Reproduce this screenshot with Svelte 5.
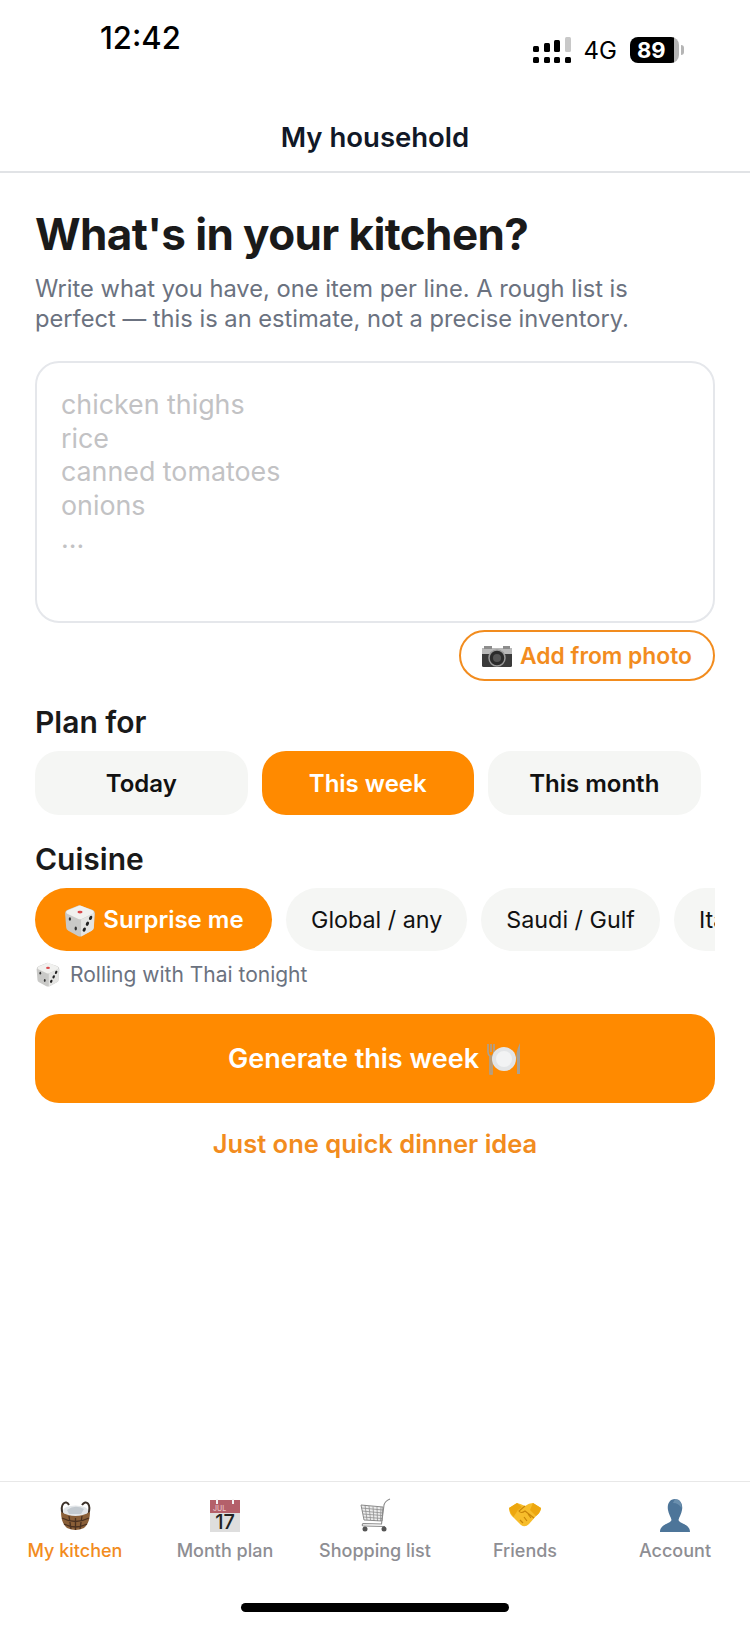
<script>
  const plans = ['Today', 'This week', 'This month'];
  const cuisines = ['Global / any', 'Saudi / Gulf', 'Italian'];
  const tabs = [
    { label: 'My kitchen', icon: 'basket', active: true },
    { label: 'Month plan', icon: 'calendar' },
    { label: 'Shopping list', icon: 'cart' },
    { label: 'Friends', icon: 'hands' },
    { label: 'Account', icon: 'bust' }
  ];
  const placeholder = 'chicken thighs\nrice\ncanned tomatoes\nonions\n...';
</script>

{#snippet dice(size)}
  <svg class="emoji" width={size} height={size} viewBox="0 0 32 32">
    <path d="M15 2 L27 6 Q30 7 30 10 L29 23 Q29 25 27 26 L18 31 Q16 32 14 31 L5 26 Q3 25 3 23 L2 10 Q2 7 5 6 Z" fill="#c9c9c7" />
    <path d="M15 2.5 Q16 2 17 2.5 L28 7 Q30 8.5 28 10 L17.500 15 Q16 15.600 14.500 15 L4 10 Q2 8.500 4 7 Z" fill="#f1f1ef" />
    <path d="M17 15.500 L29.500 9.500 L29 23 Q29 25 27 26 L17 31.500 Z" fill="#e4e4e2" />
    <ellipse cx="16" cy="8.500" rx="2.400" ry="1.300" fill="#d9484c" />
    <ellipse cx="6.500" cy="15" rx="1.100" ry="1.700" fill="#333" />
    <ellipse cx="12" cy="24" rx="1.100" ry="1.800" fill="#333" />
    <ellipse cx="26" cy="14" rx="1.400" ry="2.100" fill="#222" transform="rotate(25 26 14)" />
    <ellipse cx="23" cy="19.500" rx="1.400" ry="2.100" fill="#222" transform="rotate(25 23 19.500)" />
    <ellipse cx="20" cy="25" rx="1.400" ry="2.100" fill="#222" transform="rotate(25 20 25)" />
  </svg>
{/snippet}

{#snippet tabIcon(name)}
  {#if name === 'basket'}
    <svg width="31" height="31" viewBox="0 0 31 31">
      <path d="M3 15 C-1 4 6 -1 9 5" fill="none" stroke="#3b3028" stroke-width="2" />
      <path d="M28 15 C32 4 26 -1 22 5" fill="none" stroke="#3b3028" stroke-width="2" />
      <ellipse cx="15.500" cy="11" rx="12.500" ry="5.500" fill="#e3e6e9" />
      <path d="M7 10 Q15 4 24 9 L21 14 L9 14 Z" fill="#c3cad0" />
      <path d="M1 12 Q15.500 20 30 12 Q30 23 24 28 Q15.500 32 7 28 Q1 23 1 12 Z" fill="#8a5f38" />
      <path d="M2 18 Q15.500 25 29 18 M4 24 Q15.500 30 27 24 M9 16 L11 29 M15.500 18 L15.500 30 M22 16 L20 29" fill="none" stroke="#4a3120" stroke-width="1.300" />
    </svg>
  {:else if name === 'calendar'}
    <svg width="32" height="33" viewBox="0 0 32 33">
      <rect x="1" y="1" width="30" height="32" fill="#dedede" />
      <rect x="1" y="1" width="30" height="13" fill="#b4606a" />
      <rect x="7" y="0" width="2" height="5" fill="#f3f3f3" />
      <rect x="23" y="0" width="2" height="5" fill="#f3f3f3" />
      <text x="4" y="12" class="cal-month">JUL</text>
      <text x="16" y="30" class="cal-day" text-anchor="middle">17</text>
    </svg>
  {:else if name === 'cart'}
    <svg width="30" height="33" viewBox="0 0 30 33">
      <path d="M1 6 L23 8 L22 22 L4 21 Z" fill="#ececec" />
      <path d="M1.500 9 L23 11 M2 12 L23 14 M3 15 L22 16.500 M3.500 18 L22 19.500 M5 6 L7 21 M9 7 L10.500 21 M13 7.500 L14 22 M17 8 L17.500 22 M21 8 L20.500 22" stroke="#8f8f8f" stroke-width="0.800" fill="none" />
      <path d="M1 6 L23 8 L22 22 L4 21 Z" fill="none" stroke="#808080" stroke-width="0.900" />
      <path d="M30 0 Q25 2 24 6 L21.500 25 L3 24.500 Q1 27 4 27 L25 27.500" fill="none" stroke="#8a8a8a" stroke-width="1.100" />
      <circle cx="5" cy="30" r="2.500" fill="#555" />
      <circle cx="24" cy="30" r="2.500" fill="#555" />
    </svg>
  {:else if name === 'hands'}
    <svg width="32" height="24" viewBox="0 0 32 24">
      <path d="M0 5 L8 0 Q12 1 16 3 Q20 0 24 0 L32 5 Q32 9 28 12 L20 21 Q16 25 12 22 L5 15 Q0 11 0 5 Z" fill="#f7bd2b" />
      <path d="M0 5 Q1 10 4.500 14 L9 7 L13 4 L8 0 Z M32 5 Q31 10 27 13 L21 7 L24 0 Z" fill="#eda70f" />
      <path d="M16 3 L10 8 Q12 11 16 8 L25 15 M11 17 L14 20 M15 14 L18 18 M19 11 L22 15" fill="none" stroke="#c98508" stroke-width="1.200" />
    </svg>
  {:else}
    <svg width="30" height="33" viewBox="0 0 30 33">
      <path d="M15 0 C21 0 23 6 22 11 C21.500 15 19 18 18.500 21 C20 25 30 25 30 33 L0 33 C0 25 10 25 11.500 21 C11 18 8.500 15 8 11 C7 6 9 0 15 0 Z" fill="#4d7599" />
      <path d="M15 0 C20 0 22 5 21.500 9 C20 6 17 4 13 4 Z" fill="#7ea0bc" opacity="0.600" />
    </svg>
  {/if}
{/snippet}

<div class="page">
  <div class="status">
    <span class="time">12:42</span>
    <div class="status-right">
      <svg class="signal" width="38" height="26" viewBox="0 0 38 26">
        <rect x="0" y="9" width="6" height="6" rx="1.500" />
        <rect x="11" y="6" width="6" height="9" rx="1.500" />
        <rect x="21" y="3" width="6" height="12" rx="1.500" />
        <rect x="32" y="0" width="6" height="15" rx="1.500" fill="#c8c8c8" />
        <rect x="0" y="20" width="6" height="6" rx="1.500" />
        <rect x="11" y="20" width="6" height="6" rx="1.500" />
        <rect x="21" y="20" width="6" height="6" rx="1.500" />
        <rect x="32" y="20" width="6" height="6" rx="1.500" />
      </svg>
      <span class="net">4G</span>
      <div class="battery"><span>89</span></div>
      <div class="battery-cap"></div>
    </div>
  </div>

  <header>My household</header>

  <main>
    <h1>What's in your kitchen?</h1>
    <p class="intro">Write what you have, one item per line. A rough list is perfect — this is an estimate, not a precise inventory.</p>

    <textarea {placeholder}></textarea>

    <div class="photo-row">
      <button class="photo">
        <svg class="emoji" width="30" height="22" viewBox="0 0 30 22">
          <rect x="0" y="3" width="30" height="19" rx="1.500" fill="#3a3a3a" />
          <rect x="0" y="3" width="30" height="6" fill="#b9b9b9" />
          <rect x="2" y="1" width="8" height="3" fill="#8d8d8d" />
          <rect x="21" y="1" width="7" height="3" fill="#8d8d8d" />
          <circle cx="15" cy="13" r="8" fill="#2b2b2b" stroke="#9a9a9a" stroke-width="1.500" />
          <circle cx="15" cy="13" r="4" fill="#555" />
        </svg>
        Add from photo
      </button>
    </div>

    <h2>Plan for</h2>
    <div class="plans">
      {#each plans as plan}
        <button class="plan" class:on={plan === 'This week'}>{plan}</button>
      {/each}
    </div>

    <h2 class="cuisine-title">Cuisine</h2>
    <div class="chips">
      <button class="chip on">{@render dice(34)} Surprise me</button>
      {#each cuisines as c}
        <button class="chip">{c}</button>
      {/each}
    </div>
    <div class="rolling">{@render dice(26)} Rolling with Thai tonight</div>

    <button class="generate">
      Generate this week
      <svg class="emoji" width="36" height="32" viewBox="0 0 36 32">
        <path d="M2 1 L2 9 Q2 12 4 13 L4 31 L6 31 L6 13 Q8 12 8 9 L8 1 M5 1 L5 9" fill="none" stroke="#a8a196" stroke-width="1.600" />
        <circle cx="18" cy="16" r="12" fill="#e3e5e7" />
        <circle cx="18" cy="16" r="8" fill="#f2f3f4" />
        <path d="M34 0 L34 31 L31 31 L31 18 Q29 10 34 0 Z" fill="#a8a196" />
      </svg>
    </button>
    <button class="quick">Just one quick dinner idea</button>
  </main>

  <nav>
    {#each tabs as tab}
      <div class="tab" class:active={tab.active}>
        <div class="tab-icon">{@render tabIcon(tab.icon)}</div>
        <span>{tab.label}</span>
      </div>
    {/each}
  </nav>
  <div class="home"><i></i></div>
</div>

<style>
  :global(body) {
    margin: 0;
    background: #fff;
  }
  .page {
    width: 750px;
    height: 1626px;
    display: flex;
    flex-direction: column;
    font-family: Inter, "Noto Sans", sans-serif;
    overflow: hidden;
    background: #fff;
  }
  button {
    font-family: inherit;
    border: none;
    margin: 0;
  }

  .status {
    height: 100px;
    display: flex;
    justify-content: space-between;
    box-sizing: border-box;
    padding: 20px 66px 0 100px;
    color: #000;
  }
  .time {
    font-size: 31px;
    font-weight: 500;
    line-height: 36px;
  }
  .status-right {
    display: flex;
    align-items: center;
    height: 26px;
    margin-top: 17px;
  }
  .signal {
    margin-right: 13px;
  }
  .net {
    font-size: 24px;
    font-weight: 400;
    margin-right: 13px;
  }
  .battery {
    width: 49px;
    height: 26px;
    border-radius: 8px;
    background: linear-gradient(90deg, #000 90%, #b5b5b5 90%);
    display: flex;
    align-items: center;
    padding-left: 7px;
    box-sizing: border-box;
    color: #fff;
    font-size: 22px;
    font-weight: 700;
  }
  .battery-cap {
    width: 3px;
    height: 10px;
    margin-left: 2px;
    border-radius: 0 3px 3px 0;
    background: #b5b5b5;
  }

  header {
    height: 73px;
    box-sizing: border-box;
    border-bottom: 2px solid #e1e3e6;
    text-align: center;
    font-size: 27.500px;
    font-weight: 600;
    line-height: 36px;
    padding-top: 19px;
    color: #111827;
  }

  main {
    flex: 1;
    padding: 0 35px;
    display: flex;
    flex-direction: column;
    align-items: flex-start;
    min-height: 0;
  }
  h1 {
    margin: 33px 0 0;
    font-size: 44px;
    line-height: 56px;
    font-weight: 700;
    letter-spacing: -0.6px;
    color: #1a1a1a;
  }
  .intro {
    margin: 12px 0 0;
    font-size: 23.700px;
    line-height: 30px;
    color: #6b7280;
  }
  textarea {
    display: block;
    width: 100%;
    height: 262px;
    margin-top: 27px;
    box-sizing: border-box;
    border: 2px solid #e5e7eb;
    border-radius: 24px;
    padding: 25px 24px;
    font-family: inherit;
    font-size: 26.800px;
    line-height: 33.500px;
    resize: none;
    outline: none;
    background: #fff;
  }
  textarea::placeholder {
    color: #c2c2c4;
    opacity: 1;
  }
  .photo-row {
    align-self: stretch;
    display: flex;
    justify-content: flex-end;
    margin-top: 7px;
  }
  .photo {
    width: 256px;
    height: 51px;
    border: 2px solid #f28c1e;
    border-radius: 26px;
    background: #fff;
    color: #f28c1e;
    font-size: 22.800px;
    font-weight: 600;
    display: flex;
    align-items: center;
    justify-content: center;
    gap: 8px;
    padding: 0;
  }
  h2 {
    margin: 23px 0 0;
    font-size: 30px;
    line-height: 36px;
    font-weight: 600;
    color: #1a1a1a;
  }
  .cuisine-title {
    margin-top: 26px;
  }
  .plans {
    display: flex;
    gap: 14px;
    margin-top: 11px;
  }
  .plan {
    width: 212.500px;
    height: 64px;
    border-radius: 24px;
    background: #f5f6f4;
    color: #111;
    font-size: 24px;
    font-weight: 600;
    padding: 0;
  }
  .plan.on, .chip.on {
    background: #ff8a00;
    color: #fff;
  }
  .chips {
    align-self: stretch;
    display: flex;
    gap: 14px;
    margin-top: 11px;
    overflow: hidden;
  }
  .chip {
    flex: none;
    height: 63px;
    border-radius: 32px;
    background: #f5f6f4;
    color: #111;
    font-size: 23.300px;
    font-weight: 400;
    padding: 0 25px;
    white-space: nowrap;
    display: flex;
    align-items: center;
  }
  .chip.on {
    width: 237px;
    justify-content: center;
    gap: 6px;
    font-size: 24px;
    font-weight: 600;
    padding: 0;
  }
  .rolling {
    display: flex;
    align-items: center;
    gap: 9px;
    margin-top: 8px;
    height: 30px;
    font-size: 21px;
    color: #6b7280;
  }
  .generate {
    align-self: stretch;
    height: 89px;
    margin-top: 25px;
    border-radius: 24px;
    background: #ff8a00;
    color: #fff;
    font-size: 27px;
    font-weight: 600;
    display: flex;
    align-items: center;
    justify-content: center;
    gap: 7px;
  }
  .quick {
    align-self: center;
    background: none;
    color: #f28c1e;
    font-size: 25.500px;
    font-weight: 600;
    margin-top: 23px;
    padding: 0;
    line-height: 36px;
  }

  nav {
    height: 107px;
    box-sizing: border-box;
    border-top: 1px solid #e8e8e8;
    display: grid;
    grid-template-columns: repeat(5, 1fr);
    padding-top: 16px;
  }
  .tab {
    display: flex;
    flex-direction: column;
    align-items: center;
    color: #8e8e93;
    font-size: 18px;
    font-weight: 500;
    gap: 5px;
  }
  .tab.active {
    color: #f28c1e;
  }
  .tab-icon {
    height: 34px;
    display: flex;
    align-items: center;
    justify-content: center;
  }
  .tab-icon svg {
    overflow: visible;
  }
  .tab span {
    line-height: 28px;
  }
  .cal-month {
    font-size: 7px;
    fill: #e8c4c8;
  }
  .cal-day {
    font-size: 20px;
    fill: #222;
  }
  .home {
    height: 38px;
    display: flex;
    justify-content: center;
  }
  .home i {
    display: block;
    width: 268px;
    height: 9px;
    border-radius: 5px;
    background: #000;
    margin-top: 15px;
  }
  .emoji {
    flex: none;
  }
</style>
